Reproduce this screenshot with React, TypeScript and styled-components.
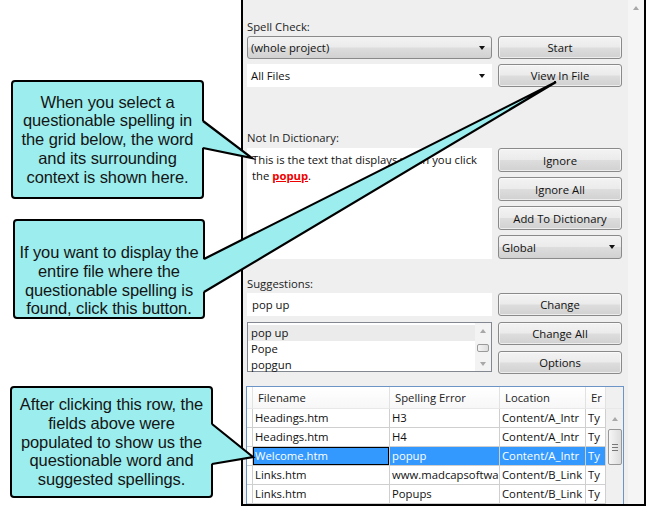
import React from 'react'
import styled, { createGlobalStyle } from 'styled-components'

const GlobalStyle = createGlobalStyle`
  html, body {
    margin: 0;
    padding: 0;
    background: #fff;
  }
`

const uiFont = `"Open Sans", "Noto Sans", sans-serif`
const calloutFill = '#9ceeee'

const Root = styled.div`
  position: relative;
  display: flex;
  width: 646px;
  height: 506px;
  overflow: hidden;
  background: #fff;
  font-family: ${uiFont};
  font-size: 11.3px;
  color: #1b1b1b;
`

const LeftGap = styled.div`
  flex: none;
  width: 241px;
`

const Panel = styled.div`
  flex: 1;
  display: flex;
  height: 506px;
  box-sizing: border-box;
  background: #efefef;
  border-left: 2px solid #000;
  border-right: 2px solid #000;
  border-bottom: 2px solid #000;
`

const Content = styled.div`
  flex: 1;
  min-width: 0;
  display: flex;
  flex-direction: column;
  padding: 19px 0 0 4px;
`

const PageScroll = styled.div`
  flex: none;
  width: 16px;
  background: #f5f5f5;
  display: flex;
  justify-content: center;
`

const UpArrow = styled.span`
  display: block;
  width: 0;
  height: 0;
  margin-top: ${p => p.$top ?? 6}px;
  border-left: 3px solid transparent;
  border-right: 3px solid transparent;
  border-bottom: 4px solid #a8a8a8;
`

const DownArrow = styled.span`
  display: block;
  width: 0;
  height: 0;
  border-left: 3px solid transparent;
  border-right: 3px solid transparent;
  border-top: 4px solid #a8a8a8;
`

const FieldLabel = styled.div`
  height: 16px;
  line-height: 16px;
  margin-top: ${p => p.$top ?? 0}px;
  color: #222;
`

const Section = styled.div`
  display: grid;
  grid-template-columns: 245px 124px;
  grid-template-rows: ${p => p.$rows};
  column-gap: 6px;
  row-gap: ${p => p.$gap}px;
  margin-top: ${p => p.$top ?? 1}px;
`

const Button = styled.div`
  display: flex;
  align-items: center;
  justify-content: center;
  box-sizing: border-box;
  border: 1px solid #8a8a8a;
  border-radius: 3px;
  background: linear-gradient(#f3f3f3 0%, #ebebeb 48%, #dddddd 52%, #d1d1d1 100%);
  box-shadow: inset 0 0 0 1px rgba(255, 255, 255, 0.6);
  color: #111;
`

const Combo = styled.div`
  display: flex;
  align-items: center;
  justify-content: space-between;
  box-sizing: border-box;
  padding: 0 6px 0 3px;
  border: 1px solid ${p => (p.$plain ? '#fff' : '#8a8a8a')};
  border-radius: ${p => (p.$plain ? 0 : 3)}px;
  background: ${p =>
    p.$plain ? '#fff' : 'linear-gradient(#f3f3f3 0%, #ebebeb 48%, #dddddd 52%, #d1d1d1 100%)'};
  color: #111;
`

const ComboArrow = styled.span`
  width: 0;
  height: 0;
  border-left: 3.5px solid transparent;
  border-right: 3.5px solid transparent;
  border-top: 4px solid #111;
`

const TextBox = styled.div`
  display: flex;
  align-items: center;
  box-sizing: border-box;
  padding: 0 5px;
  background: #fff;
  color: #111;
`

const ContextArea = styled.div`
  grid-row: 1 / 5;
  box-sizing: border-box;
  padding: 4px 5px;
  background: #fff;
  line-height: 16px;
  color: #111;
`

const Misspelled = styled.span`
  color: #ee0000;
  font-weight: bold;
  text-decoration: underline;
`

const ListBox = styled.div`
  grid-row: 2 / 4;
  display: flex;
  height: 50px;
  box-sizing: border-box;
  border: 1px solid #828790;
  background: #fff;
`

const ListItems = styled.div`
  flex: 1;
  padding-top: 2px;
`

const ListItem = styled.div`
  height: 16px;
  line-height: 16px;
  padding-left: 3px;
  background: ${p => (p.$active ? '#ebebeb' : 'transparent')};
  color: #111;
`

const ListScroll = styled.div`
  flex: none;
  width: 16px;
  display: flex;
  flex-direction: column;
  align-items: center;
  justify-content: space-between;
  padding: 6px 0 5px;
  box-sizing: border-box;
  background: #f3f3f3;
`

const SmallThumb = styled.div`
  width: 12px;
  height: 8px;
  box-sizing: border-box;
  border: 1px solid #9a9a9a;
  border-radius: 2px;
  background: linear-gradient(90deg, #f4f4f4, #dedede);
`

const DataGrid = styled.div`
  display: flex;
  flex-direction: column;
  width: 378px;
  margin: 12px 0 0 -1px;
  box-sizing: border-box;
  border: 1px solid #6d94c7;
  border-bottom: none;
  background: #f0f0f0;
  flex: 1;
  overflow: hidden;
`

const columns = '6px 137px 110px 86px 20px'

const HeaderRow = styled.div`
  display: grid;
  grid-template-columns: ${columns} 17px;
  height: 22px;
  background: #fff;
`

const HeaderCell = styled.div`
  box-sizing: border-box;
  padding-left: 5px;
  line-height: 22px;
  white-space: nowrap;
  overflow: hidden;
  border-right: 1px solid #e2e2e2;
  border-bottom: 1px solid #e8e8e8;
  background: linear-gradient(#ffffff, #f7f7f7);
  color: #222;

  &:first-child,
  &:last-child {
    padding: 0;
  }

  &:last-child {
    border-right: none;
    background: #f0f0f0;
  }
`

const GridBody = styled.div`
  display: flex;
  flex: 1;
`

const GridRows = styled.div`
  flex: 1;
  background: #fff;
`

const GridRow = styled.div`
  display: grid;
  grid-template-columns: ${columns};
  height: 19px;
  background: ${p => (p.$selected ? '#3399ff' : '#fff')};
  color: ${p => (p.$selected ? '#fff' : '#111')};
`

const GridCell = styled.div`
  box-sizing: border-box;
  padding-left: 2px;
  line-height: 18px;
  white-space: nowrap;
  overflow: hidden;
  border-right: 1px solid #cfcfcf;
  border-bottom: 1px solid #cfcfcf;
  box-shadow: ${p => (p.$focused ? 'inset 0 0 0 1px #000' : 'none')};

  &:first-child {
    padding: 0;
    background: #fff;
  }
`

const GridScroll = styled.div`
  flex: none;
  width: 17px;
  display: flex;
  flex-direction: column;
  align-items: center;
  background: #f0f0f0;
`

const Thumb = styled.div`
  display: flex;
  flex-direction: column;
  align-items: center;
  justify-content: center;
  gap: 2px;
  width: 14px;
  height: 36px;
  margin-top: 8px;
  box-sizing: border-box;
  border: 1px solid #979797;
  border-radius: 2px;
  background: linear-gradient(90deg, #f6f6f6, #dcdcdc);
`

const Grip = styled.span`
  width: 6px;
  height: 1px;
  background: #777;
`

const CalloutBox = styled.div`
  position: absolute;
  left: ${p => p.$x}px;
  top: ${p => p.$y}px;
  width: ${p => p.$w}px;
  height: ${p => p.$h}px;
  box-sizing: border-box;
  padding-top: ${p => p.$pad ?? 0}px;
  display: flex;
  align-items: center;
  justify-content: center;
  text-align: center;
  white-space: nowrap;
  background: ${calloutFill};
  border: 2px solid #000;
  border-radius: 4px;
  font-family: "Liberation Sans", Arial, sans-serif;
  font-size: 16.5px;
  line-height: 18.7px;
  letter-spacing: -0.1px;
  color: #151515;
`

const Pointers = styled.svg`
  position: absolute;
  left: 0;
  top: 0;
  pointer-events: none;
`

type Wedge = { x: number; y1: number; y2: number; tx: number; ty: number }

const wedges: Wedge[] = [
  { x: 203, y1: 121, y2: 148, tx: 252, ty: 158 },
  { x: 204, y1: 259, y2: 292, tx: 556, ty: 82 },
  { x: 212, y1: 424, y2: 464, tx: 253, ty: 457 }
]

const rows = [
  ['Headings.htm', 'H3', 'Content/A_Intr', 'Ty'],
  ['Headings.htm', 'H4', 'Content/A_Intr', 'Ty'],
  ['Welcome.htm', 'popup', 'Content/A_Intr', 'Ty'],
  ['Links.htm', 'www.madcapsoftwa', 'Content/B_Link', 'Ty'],
  ['Links.htm', 'Popups', 'Content/B_Link', 'Ty']
]

const App: React.FC = () => {
  return (
    <Root>
      <GlobalStyle />
      <LeftGap />
      <Panel>
        <Content>
          <FieldLabel>Spell Check:</FieldLabel>
          <Section $rows="23px 23px" $gap={5}>
            <Combo>(whole project)<ComboArrow /></Combo>
            <Button>Start</Button>
            <Combo $plain>All Files<ComboArrow /></Combo>
            <Button>View In File</Button>
          </Section>

          <FieldLabel $top={43}>Not In Dictionary:</FieldLabel>
          <Section $rows="24px 24px 24px 24px" $gap={5} $top={2}>
            <ContextArea>
              This is the text that displays when you click the <Misspelled>popup</Misspelled>.
            </ContextArea>
            <Button>Ignore</Button>
            <Button>Ignore All</Button>
            <Button>Add To Dictionary</Button>
            <Combo>Global<ComboArrow /></Combo>
          </Section>

          <FieldLabel $top={17}>Suggestions:</FieldLabel>
          <Section $rows="23px 23px 23px" $gap={6}>
            <TextBox>pop up</TextBox>
            <Button>Change</Button>
            <ListBox>
              <ListItems>
                <ListItem $active>pop up</ListItem>
                <ListItem>Pope</ListItem>
                <ListItem>popgun</ListItem>
              </ListItems>
              <ListScroll>
                <UpArrow $top={0} />
                <SmallThumb />
                <DownArrow />
              </ListScroll>
            </ListBox>
            <Button>Change All</Button>
            <Button>Options</Button>
          </Section>

          <DataGrid>
            <HeaderRow>
              <HeaderCell />
              <HeaderCell>Filename</HeaderCell>
              <HeaderCell>Spelling Error</HeaderCell>
              <HeaderCell>Location</HeaderCell>
              <HeaderCell>Er</HeaderCell>
              <HeaderCell />
            </HeaderRow>
            <GridBody>
              <GridRows>
                {rows.map((r, i) => (
                  <GridRow key={i} $selected={i === 2}>
                    <GridCell />
                    <GridCell $focused={i === 2}>{r[0]}</GridCell>
                    <GridCell>{r[1]}</GridCell>
                    <GridCell>{r[2]}</GridCell>
                    <GridCell>{r[3]}</GridCell>
                  </GridRow>
                ))}
              </GridRows>
              <GridScroll>
                <UpArrow $top={8} />
                <Thumb>
                  <Grip />
                  <Grip />
                  <Grip />
                </Thumb>
              </GridScroll>
            </GridBody>
          </DataGrid>
        </Content>
        <PageScroll>
          <UpArrow />
        </PageScroll>
      </Panel>

      <CalloutBox $x={11} $y={80} $w={193} $h={119}>
        When you select a<br />
        questionable spelling in<br />
        the grid below, the word<br />
        and its surrounding<br />
        context is shown here.
      </CalloutBox>
      <CalloutBox $x={13} $y={219} $w={192} $h={100} $pad={23}>
        If you want to display the<br />
        entire file where the<br />
        questionable spelling is<br />
        found, click this button.
      </CalloutBox>
      <CalloutBox $x={10} $y={386} $w={203} $h={112}>
        After clicking this row, the<br />
        fields above were<br />
        populated to show us the<br />
        questionable word and<br />
        suggested spellings.
      </CalloutBox>

      <Pointers width="646" height="506" viewBox="0 0 646 506">
        {wedges.map((w, i) => (
          <g key={i}>
            <polygon
              points={`${w.x - 2},${w.y1 + 1} ${w.x},${w.y1} ${w.tx},${w.ty} ${w.x},${w.y2} ${w.x - 2},${w.y2 - 1}`}
              fill={calloutFill}
            />
            <polyline
              points={`${w.x},${w.y1} ${w.tx},${w.ty} ${w.x},${w.y2}`}
              fill="none"
              stroke="#000"
              strokeWidth={2.2}
              strokeLinejoin="miter"
              strokeMiterlimit={12}
            />
          </g>
        ))}
      </Pointers>
    </Root>
  )
}

export default App
